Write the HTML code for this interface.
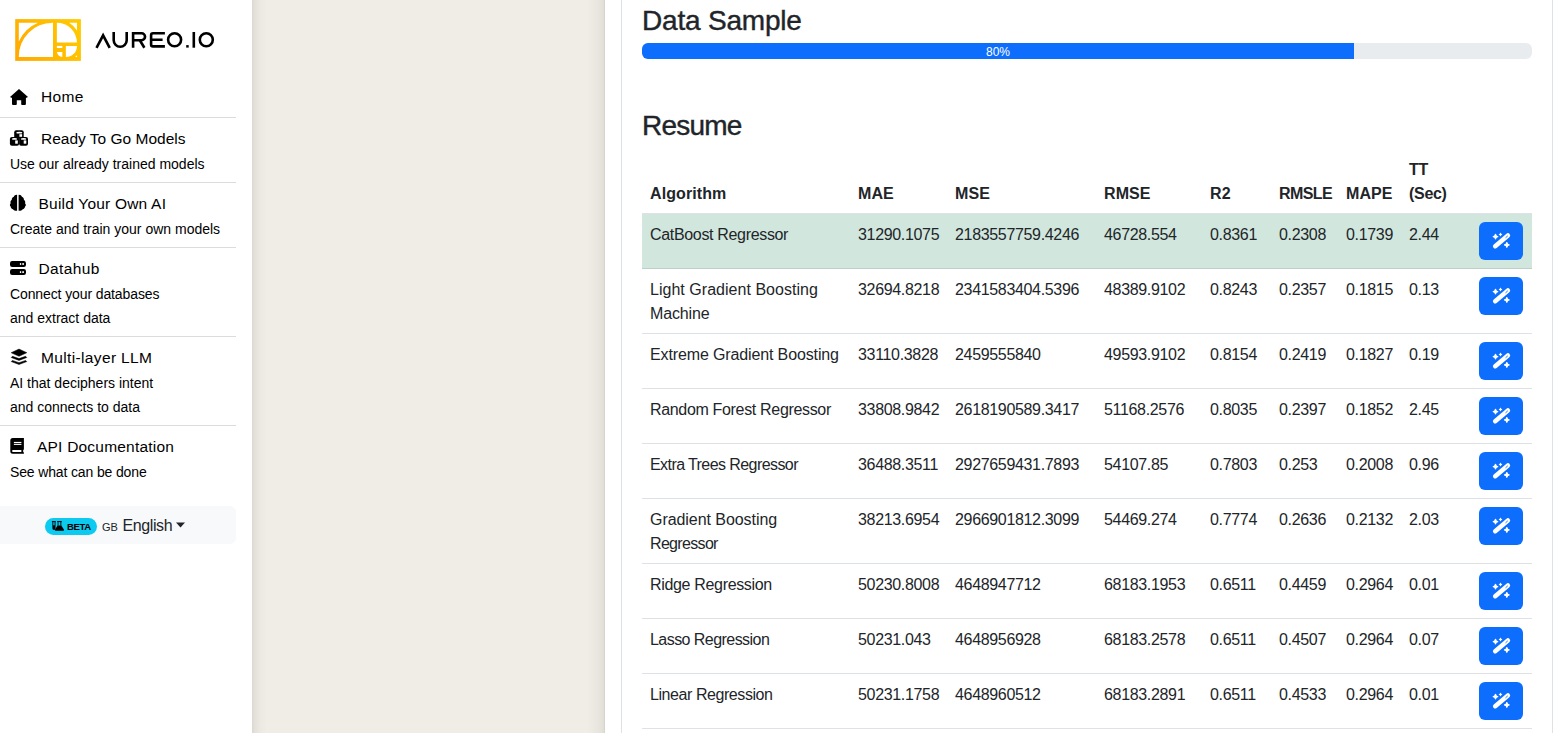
<!DOCTYPE html>
<html><head><meta charset="utf-8">
<style>
*{box-sizing:border-box;margin:0;padding:0}
html,body{width:1555px;height:733px;overflow:hidden;background:#fff;font-family:"Liberation Sans",sans-serif;color:#212529}
.abs{position:absolute}
#side{position:absolute;left:0;top:0;width:252px;height:733px;background:#fff}
#beige{position:absolute;left:252px;top:0;width:353px;height:733px;background:#f0ede6;
 background-image:linear-gradient(90deg,rgba(0,0,0,.085) 0,rgba(0,0,0,.05) 3px,rgba(0,0,0,.02) 8px,rgba(0,0,0,0) 15px),
 linear-gradient(270deg,rgba(0,0,0,.14) 0,rgba(0,0,0,.07) 1px,rgba(0,0,0,.045) 4px,rgba(0,0,0,.015) 12px,rgba(0,0,0,0) 19px)}
#main{position:absolute;left:605px;top:0;width:950px;height:733px;background:#fff}
#card{position:absolute;left:621px;top:-20px;width:932px;height:800px;border-left:1px solid #dee2e6;border-right:1px solid #dee2e6}
.t{position:absolute;white-space:nowrap;line-height:20px}
.nt{font-size:15.5px;color:#000}
.ns{font-size:14px;color:#000}
.div{position:absolute;left:0;width:236px;height:1px;background:#dcdcdc}

.h3{font-size:28px;line-height:34px;letter-spacing:-0.2px;color:#212529;-webkit-text-stroke:0.4px #212529}
#prog{left:642px;top:43px;width:890px;height:16px;background:#e9ecef;border-radius:6px;overflow:hidden}
#bar{width:712px;height:16px;background:#0d6efd;color:#fff;font-size:12px;line-height:16px;text-align:center}
#bar span{position:relative;top:1px}
#tbl{position:absolute;left:642px;top:149px;width:890px;border-collapse:collapse;table-layout:fixed;font-size:16px;line-height:24px;color:#212529}
#tbl td,#tbl th{padding:9px 8px 7px 8px;text-align:left;vertical-align:top;white-space:nowrap;border-bottom:1px solid #dee2e6;letter-spacing:-0.33px}
#tbl th{vertical-align:bottom;font-weight:bold;letter-spacing:0.1px}
#tbl thead th{border-bottom-color:#dee2e6}
#tbl tr{height:55px}
#tbl tr.succ td{background:#d1e7dd;border-bottom-color:#bcd0c7}
#tbl td.bt{padding:8px 9px 8px 8px;vertical-align:top}
.btn{display:block;width:44px;height:38px;background:#0d6efd;border-radius:6px}
</style></head><body>
<div id="side">
  <svg class="abs" style="left:0;top:0" width="240" height="70" viewBox="0 0 240 70">
    <defs><linearGradient id="lg" gradientUnits="userSpaceOnUse" x1="15" y1="61" x2="81" y2="19"><stop offset="0" stop-color="#ffa800"/><stop offset="1" stop-color="#ffcc00"/></linearGradient></defs>
    <rect x="15.2" y="19.1" width="65.7" height="41.8" fill="url(#lg)"/>
    <g fill="#fff">
      <path d="M18.8 22.8 H38 A36.7 36.7 0 0 0 18.8 41.4 Z"/>
      <path d="M18.8 57 V56.4 A33.6 33.6 0 0 1 52.4 22.8 H53 V57 Z"/>
      <path d="M56.9 22.8 A19.9 19.9 0 0 1 76.9 42.6 H56.9 Z"/>
      <path d="M69.2 22.8 H77 V30.6 A23.35 23.35 0 0 0 69.2 22.8 Z"/>
      <rect x="56.9" y="45.9" width="5.4" height="2.1"/>
      <path d="M65.9 45.9 H77 A11.1 11.1 0 0 1 65.9 57 Z"/>
      <path d="M62.3 52 V57 A6.2 6.2 0 0 1 56.9 52 Z"/>
      <path d="M77 55.2 V57 H75.2 Z"/>
    </g>
    <g fill="none" stroke="#000" stroke-width="2.6" stroke-linejoin="miter">
      <path d="M96.5 47.9 L103.1 35.3 L109.7 47.9"/>
      <path d="M113.7 32 V40.3 A6.3 6.3 0 0 0 126.7 40.3 V32"/>
      <path d="M133.1 47.7 V33.3 H141.6 A3.45 3.45 0 0 1 141.6 40.2 H133.1 M139.8 40.2 L144.4 47.7"/>
      <path d="M164.9 33.3 H153 Q151.1 33.3 151.1 35.2 V44.5 Q151.1 46.4 153 46.4 H164.9 M151.1 39.8 H162.6"/>
      <circle cx="174.6" cy="39.8" r="6.5"/>
      <rect x="186.2" y="45.1" width="2.5" height="2.5" fill="#000" stroke="none"/>
      <line x1="193.8" y1="32" x2="193.8" y2="47.7"/>
      <circle cx="206.3" cy="39.8" r="6.5"/>
    </g>
  </svg>

  <!-- Home -->
  <svg class="abs" style="left:10px;top:89px" width="18" height="16" viewBox="0 0 18 16"><path d="M9 0 L18 8 L15.9 9 L15.9 15 Q15.9 16 14.9 16 H12 Q11.2 16 11.2 15 V11.2 H6.8 V15 Q6.8 16 6 16 H3 Q2 16 2 15 V9 L0 8 Z" fill="#000"/></svg>
  <div class="t nt" style="left:41px;top:87px;letter-spacing:0.35px">Home</div>
  <div class="div" style="top:117px"></div>

  <!-- Ready -->
  <svg class="abs" style="left:9px;top:130px" width="20" height="16" viewBox="0 0 20 16"><g fill="#000"><rect x="5.2" y="0.3" width="9.5" height="8.5" rx="2"/><rect x="0.9" y="7.1" width="9.2" height="8.6" rx="2"/><rect x="10.1" y="7.1" width="8.9" height="8.6" rx="2"/></g><g fill="#fff"><ellipse cx="10.3" cy="2.65" rx="3.1" ry="0.85"/><rect x="10.4" y="4.2" width="2.7" height="2.6"/><ellipse cx="5.5" cy="8.95" rx="2.6" ry="0.85"/><rect x="6.2" y="10.4" width="2.6" height="3.3"/><ellipse cx="14.55" cy="8.95" rx="2.75" ry="0.85"/><rect x="14.7" y="10.4" width="2.6" height="3.3"/></g></svg>
  <div class="t nt" style="left:41px;top:129px">Ready To Go Models</div>
  <div class="t ns" style="left:10px;top:154px">Use our already trained models</div>
  <div class="div" style="top:182px"></div>

  <!-- Build -->
  <svg class="abs" style="left:9px;top:194px" width="18" height="18" viewBox="0 0 18 18"><path fill="#000" d="M8.1 0.9 C6.5 0.7 5.2 1.6 4.8 2.8 C3.4 3.2 2.7 4.4 2.8 5.8 C1.6 6.6 1.2 8 1.6 9.4 C0.6 10.2 0.6 11.6 1.6 12.4 C1.8 13.8 2.7 15 4 15.2 C4.8 16.4 6.6 17 8.1 16.8 Z M9.6 0.9 C11.2 0.7 12.5 1.6 12.9 2.8 C14.3 3.2 15 4.4 14.9 5.8 C16.1 6.6 16.5 8 16.1 9.4 C17.1 10.2 17.1 11.6 16.1 12.4 C15.9 13.8 15 15 13.7 15.2 C12.9 16.4 11.1 17 9.6 16.8 Z"/></svg>
  <div class="t nt" style="left:38.5px;top:194px;letter-spacing:0.21px">Build Your Own AI</div>
  <div class="t ns" style="left:10px;top:219px">Create and train your own models</div>
  <div class="div" style="top:247px"></div>

  <!-- Datahub -->
  <svg class="abs" style="left:10px;top:261px" width="17" height="15" viewBox="0 0 17 15"><rect x="0" y="0" width="16" height="5.9" rx="2.2" fill="#000"/><rect x="0" y="8.1" width="16" height="5.9" rx="2.2" fill="#000"/><g fill="#fff"><rect x="9.9" y="2.1" width="1.3" height="1.8"/><rect x="12.3" y="2.1" width="1.6" height="1.8"/><rect x="9.9" y="10.2" width="1.3" height="1.8"/><rect x="12.3" y="10.2" width="1.6" height="1.8"/></g></svg>
  <div class="t nt" style="left:38.5px;top:259px;letter-spacing:0.38px">Datahub</div>
  <div class="t ns" style="left:10px;top:284px;letter-spacing:-0.11px">Connect your databases</div>
  <div class="t ns" style="left:10px;top:308px">and extract data</div>
  <div class="div" style="top:336px"></div>

  <!-- Multi -->
  <svg class="abs" style="left:10px;top:348px" width="18" height="18" viewBox="0 0 18 18"><g fill="#000" stroke="#000" stroke-width="0.5" stroke-linejoin="round"><path d="M9 1.1 L16.8 4.7 L9 8.3 L1.2 4.7 Z"/><path d="M1.2 9.5 L9 12.4 L16.8 9.5 L15.6 8.3 L9 10.6 L2.4 8.3 Z"/><path d="M1.2 13.6 L9 16.5 L16.8 13.6 L15.6 12.4 L9 14.7 L2.4 12.4 Z"/></g></svg>
  <div class="t nt" style="left:41px;top:348px;letter-spacing:0.36px">Multi-layer LLM</div>
  <div class="t ns" style="left:10px;top:373px">AI that deciphers intent</div>
  <div class="t ns" style="left:10px;top:397px">and connects to data</div>
  <div class="div" style="top:425px"></div>

  <!-- API -->
  <svg class="abs" style="left:10px;top:438px" width="15" height="16" viewBox="0 0 15 16"><path d="M2.8 0.1 H13.9 V11.8 H13.2 V14.2 H13.9 V15.7 H2.8 Q0.3 15.7 0.3 13.2 V2.6 Q0.3 0.1 2.8 0.1 Z" fill="#000"/><rect x="3.9" y="3.9" width="7.5" height="1.1" fill="#fff"/><rect x="3.9" y="5.8" width="7.5" height="1.1" fill="#fff"/><path d="M3 12.1 H11.4 V14 H3 Q2.1 14 2.1 13.05 Q2.1 12.1 3 12.1Z" fill="#fff"/></svg>
  <div class="t nt" style="left:37px;top:437px;letter-spacing:0.21px">API Documentation</div>
  <div class="t ns" style="left:10px;top:462px;letter-spacing:-0.14px">See what can be done</div>

  <!-- language -->
  <div class="abs" style="left:-8px;top:506px;width:244px;height:38px;background:#f8f9fa;border-radius:6px"></div>
  <div class="abs" style="left:45px;top:518px;width:52px;height:17px;background:#0dcaf0;border-radius:9px"></div>
  <svg class="abs" style="left:51px;top:520px" width="14" height="12" viewBox="0 0 14 12"><g fill="#000"><rect x="0.9" y="1.1" width="3.9" height="1"/><rect x="1.4" y="2" width="0.9" height="3.5"/><rect x="3.6" y="2" width="0.9" height="3.5"/><path d="M1.4 5.2 H4.5 V8 Q4.5 9.9 2.95 9.9 Q1.4 9.9 1.4 8 Z"/><rect x="6.1" y="1.1" width="4.7" height="1"/><rect x="6.6" y="2" width="0.9" height="3.7"/><rect x="9.4" y="2" width="0.9" height="3.7"/><path d="M6.6 5.5 H10.3 L12.9 9.6 Q13.3 10.8 12.2 10.8 H4.7 Q3.6 10.8 4 9.6 Z"/></g></svg>
  <div class="t" style="left:67px;top:517px;font-size:9.6px;letter-spacing:-0.45px;font-weight:bold;color:#000">BETA</div>
  <div class="t" style="left:102px;top:517px;font-size:11px;color:#212529">GB</div>
  <div class="t" style="left:122.5px;top:516px;font-size:16px;letter-spacing:-0.4px;color:#212529">English</div>
  <svg class="abs" style="left:176px;top:522px" width="9" height="6" viewBox="0 0 9 6"><path d="M0 0.5 H9 L4.5 5.5Z" fill="#212529"/></svg>
</div>

<div id="beige"></div>
<div id="main"></div>
<div id="card"></div>
<div class="t h3" style="left:642px;top:4px">Data Sample</div>
<div class="abs" id="prog"><div id="bar"><span>80%</span></div></div>
<div class="t h3" style="left:642px;top:109px;letter-spacing:-0.8px">Resume</div>
<table id="tbl">
<colgroup><col style="width:208px"><col style="width:97px"><col style="width:149px"><col style="width:106px"><col style="width:69px"><col style="width:67px"><col style="width:63px"><col style="width:70px"><col style="width:61px"></colgroup>
<thead><tr><th>Algorithm</th><th>MAE</th><th>MSE</th><th>RMSE</th><th>R2</th><th style="letter-spacing:-0.6px">RMSLE</th><th>MAPE</th><th style="letter-spacing:-0.3px">TT<br>(Sec)</th><th></th></tr></thead>
<tbody>
<tr class="succ"><td>CatBoost Regressor</td><td>31290.1075</td><td>2183557759.4246</td><td>46728.554</td><td>0.8361</td><td>0.2308</td><td>0.1739</td><td>2.44</td><td class="bt"><span class="btn"><svg width="44" height="38" viewBox="0 0 44 38"><line x1="16.2" y1="24.2" x2="28.9" y2="13.5" stroke="#fff" stroke-width="4.5" stroke-linecap="round"/><line x1="26.8" y1="15.6" x2="28.5" y2="14.1" stroke="#0d6efd" stroke-width="0.9" stroke-linecap="round"/><path d="M16.5 11.60 L17.71 13.38 L19.50 14.6 L17.71 15.81 L16.5 17.60 L15.29 15.81 L13.50 14.6 L15.29 13.38 Z M21.5 10.60 L22.27 11.73 L23.40 12.5 L22.27 13.27 L21.5 14.40 L20.73 13.27 L19.60 12.5 L20.73 11.73 Z M27.8 19.90 L29.02 21.68 L30.80 22.9 L29.02 24.11 L27.8 25.90 L26.59 24.11 L24.80 22.9 L26.59 21.68 Z" fill="#fff"/><path d="M15.85 12.00 H17.15 V13.95 H19.10 V15.25 H17.15 V17.20 H15.85 V15.25 H13.90 V13.95 H15.85 Z M27.15 20.30 H28.45 V22.25 H30.40 V23.55 H28.45 V25.50 H27.15 V23.55 H25.20 V22.25 H27.15 Z" fill="#fff"/></svg></span></td></tr>
<tr style="height:65px"><td><span style="letter-spacing:0.03px">Light Gradient Boosting</span><br><span style="letter-spacing:-0.13px">Machine</span></td><td>32694.8218</td><td>2341583404.5396</td><td>48389.9102</td><td>0.8243</td><td>0.2357</td><td>0.1815</td><td>0.13</td><td class="bt"><span class="btn"><svg width="44" height="38" viewBox="0 0 44 38"><line x1="16.2" y1="24.2" x2="28.9" y2="13.5" stroke="#fff" stroke-width="4.5" stroke-linecap="round"/><line x1="26.8" y1="15.6" x2="28.5" y2="14.1" stroke="#0d6efd" stroke-width="0.9" stroke-linecap="round"/><path d="M16.5 11.60 L17.71 13.38 L19.50 14.6 L17.71 15.81 L16.5 17.60 L15.29 15.81 L13.50 14.6 L15.29 13.38 Z M21.5 10.60 L22.27 11.73 L23.40 12.5 L22.27 13.27 L21.5 14.40 L20.73 13.27 L19.60 12.5 L20.73 11.73 Z M27.8 19.90 L29.02 21.68 L30.80 22.9 L29.02 24.11 L27.8 25.90 L26.59 24.11 L24.80 22.9 L26.59 21.68 Z" fill="#fff"/><path d="M15.85 12.00 H17.15 V13.95 H19.10 V15.25 H17.15 V17.20 H15.85 V15.25 H13.90 V13.95 H15.85 Z M27.15 20.30 H28.45 V22.25 H30.40 V23.55 H28.45 V25.50 H27.15 V23.55 H25.20 V22.25 H27.15 Z" fill="#fff"/></svg></span></td></tr>
<tr><td style="letter-spacing:-0.13px">Extreme Gradient Boosting</td><td>33110.3828</td><td>2459555840</td><td>49593.9102</td><td>0.8154</td><td>0.2419</td><td>0.1827</td><td>0.19</td><td class="bt"><span class="btn"><svg width="44" height="38" viewBox="0 0 44 38"><line x1="16.2" y1="24.2" x2="28.9" y2="13.5" stroke="#fff" stroke-width="4.5" stroke-linecap="round"/><line x1="26.8" y1="15.6" x2="28.5" y2="14.1" stroke="#0d6efd" stroke-width="0.9" stroke-linecap="round"/><path d="M16.5 11.60 L17.71 13.38 L19.50 14.6 L17.71 15.81 L16.5 17.60 L15.29 15.81 L13.50 14.6 L15.29 13.38 Z M21.5 10.60 L22.27 11.73 L23.40 12.5 L22.27 13.27 L21.5 14.40 L20.73 13.27 L19.60 12.5 L20.73 11.73 Z M27.8 19.90 L29.02 21.68 L30.80 22.9 L29.02 24.11 L27.8 25.90 L26.59 24.11 L24.80 22.9 L26.59 21.68 Z" fill="#fff"/><path d="M15.85 12.00 H17.15 V13.95 H19.10 V15.25 H17.15 V17.20 H15.85 V15.25 H13.90 V13.95 H15.85 Z M27.15 20.30 H28.45 V22.25 H30.40 V23.55 H28.45 V25.50 H27.15 V23.55 H25.20 V22.25 H27.15 Z" fill="#fff"/></svg></span></td></tr>
<tr><td>Random Forest Regressor</td><td>33808.9842</td><td>2618190589.3417</td><td>51168.2576</td><td>0.8035</td><td>0.2397</td><td>0.1852</td><td>2.45</td><td class="bt"><span class="btn"><svg width="44" height="38" viewBox="0 0 44 38"><line x1="16.2" y1="24.2" x2="28.9" y2="13.5" stroke="#fff" stroke-width="4.5" stroke-linecap="round"/><line x1="26.8" y1="15.6" x2="28.5" y2="14.1" stroke="#0d6efd" stroke-width="0.9" stroke-linecap="round"/><path d="M16.5 11.60 L17.71 13.38 L19.50 14.6 L17.71 15.81 L16.5 17.60 L15.29 15.81 L13.50 14.6 L15.29 13.38 Z M21.5 10.60 L22.27 11.73 L23.40 12.5 L22.27 13.27 L21.5 14.40 L20.73 13.27 L19.60 12.5 L20.73 11.73 Z M27.8 19.90 L29.02 21.68 L30.80 22.9 L29.02 24.11 L27.8 25.90 L26.59 24.11 L24.80 22.9 L26.59 21.68 Z" fill="#fff"/><path d="M15.85 12.00 H17.15 V13.95 H19.10 V15.25 H17.15 V17.20 H15.85 V15.25 H13.90 V13.95 H15.85 Z M27.15 20.30 H28.45 V22.25 H30.40 V23.55 H28.45 V25.50 H27.15 V23.55 H25.20 V22.25 H27.15 Z" fill="#fff"/></svg></span></td></tr>
<tr><td style="letter-spacing:-0.58px">Extra Trees Regressor</td><td>36488.3511</td><td>2927659431.7893</td><td>54107.85</td><td>0.7803</td><td>0.253</td><td>0.2008</td><td>0.96</td><td class="bt"><span class="btn"><svg width="44" height="38" viewBox="0 0 44 38"><line x1="16.2" y1="24.2" x2="28.9" y2="13.5" stroke="#fff" stroke-width="4.5" stroke-linecap="round"/><line x1="26.8" y1="15.6" x2="28.5" y2="14.1" stroke="#0d6efd" stroke-width="0.9" stroke-linecap="round"/><path d="M16.5 11.60 L17.71 13.38 L19.50 14.6 L17.71 15.81 L16.5 17.60 L15.29 15.81 L13.50 14.6 L15.29 13.38 Z M21.5 10.60 L22.27 11.73 L23.40 12.5 L22.27 13.27 L21.5 14.40 L20.73 13.27 L19.60 12.5 L20.73 11.73 Z M27.8 19.90 L29.02 21.68 L30.80 22.9 L29.02 24.11 L27.8 25.90 L26.59 24.11 L24.80 22.9 L26.59 21.68 Z" fill="#fff"/><path d="M15.85 12.00 H17.15 V13.95 H19.10 V15.25 H17.15 V17.20 H15.85 V15.25 H13.90 V13.95 H15.85 Z M27.15 20.30 H28.45 V22.25 H30.40 V23.55 H28.45 V25.50 H27.15 V23.55 H25.20 V22.25 H27.15 Z" fill="#fff"/></svg></span></td></tr>
<tr style="height:65px"><td><span style="letter-spacing:-0.06px">Gradient Boosting</span><br><span style="letter-spacing:-0.67px">Regressor</span></td><td>38213.6954</td><td>2966901812.3099</td><td>54469.274</td><td>0.7774</td><td>0.2636</td><td>0.2132</td><td>2.03</td><td class="bt"><span class="btn"><svg width="44" height="38" viewBox="0 0 44 38"><line x1="16.2" y1="24.2" x2="28.9" y2="13.5" stroke="#fff" stroke-width="4.5" stroke-linecap="round"/><line x1="26.8" y1="15.6" x2="28.5" y2="14.1" stroke="#0d6efd" stroke-width="0.9" stroke-linecap="round"/><path d="M16.5 11.60 L17.71 13.38 L19.50 14.6 L17.71 15.81 L16.5 17.60 L15.29 15.81 L13.50 14.6 L15.29 13.38 Z M21.5 10.60 L22.27 11.73 L23.40 12.5 L22.27 13.27 L21.5 14.40 L20.73 13.27 L19.60 12.5 L20.73 11.73 Z M27.8 19.90 L29.02 21.68 L30.80 22.9 L29.02 24.11 L27.8 25.90 L26.59 24.11 L24.80 22.9 L26.59 21.68 Z" fill="#fff"/><path d="M15.85 12.00 H17.15 V13.95 H19.10 V15.25 H17.15 V17.20 H15.85 V15.25 H13.90 V13.95 H15.85 Z M27.15 20.30 H28.45 V22.25 H30.40 V23.55 H28.45 V25.50 H27.15 V23.55 H25.20 V22.25 H27.15 Z" fill="#fff"/></svg></span></td></tr>
<tr><td>Ridge Regression</td><td>50230.8008</td><td>4648947712</td><td>68183.1953</td><td>0.6511</td><td>0.4459</td><td>0.2964</td><td>0.01</td><td class="bt"><span class="btn"><svg width="44" height="38" viewBox="0 0 44 38"><line x1="16.2" y1="24.2" x2="28.9" y2="13.5" stroke="#fff" stroke-width="4.5" stroke-linecap="round"/><line x1="26.8" y1="15.6" x2="28.5" y2="14.1" stroke="#0d6efd" stroke-width="0.9" stroke-linecap="round"/><path d="M16.5 11.60 L17.71 13.38 L19.50 14.6 L17.71 15.81 L16.5 17.60 L15.29 15.81 L13.50 14.6 L15.29 13.38 Z M21.5 10.60 L22.27 11.73 L23.40 12.5 L22.27 13.27 L21.5 14.40 L20.73 13.27 L19.60 12.5 L20.73 11.73 Z M27.8 19.90 L29.02 21.68 L30.80 22.9 L29.02 24.11 L27.8 25.90 L26.59 24.11 L24.80 22.9 L26.59 21.68 Z" fill="#fff"/><path d="M15.85 12.00 H17.15 V13.95 H19.10 V15.25 H17.15 V17.20 H15.85 V15.25 H13.90 V13.95 H15.85 Z M27.15 20.30 H28.45 V22.25 H30.40 V23.55 H28.45 V25.50 H27.15 V23.55 H25.20 V22.25 H27.15 Z" fill="#fff"/></svg></span></td></tr>
<tr><td style="letter-spacing:-0.55px">Lasso Regression</td><td>50231.043</td><td>4648956928</td><td>68183.2578</td><td>0.6511</td><td>0.4507</td><td>0.2964</td><td>0.07</td><td class="bt"><span class="btn"><svg width="44" height="38" viewBox="0 0 44 38"><line x1="16.2" y1="24.2" x2="28.9" y2="13.5" stroke="#fff" stroke-width="4.5" stroke-linecap="round"/><line x1="26.8" y1="15.6" x2="28.5" y2="14.1" stroke="#0d6efd" stroke-width="0.9" stroke-linecap="round"/><path d="M16.5 11.60 L17.71 13.38 L19.50 14.6 L17.71 15.81 L16.5 17.60 L15.29 15.81 L13.50 14.6 L15.29 13.38 Z M21.5 10.60 L22.27 11.73 L23.40 12.5 L22.27 13.27 L21.5 14.40 L20.73 13.27 L19.60 12.5 L20.73 11.73 Z M27.8 19.90 L29.02 21.68 L30.80 22.9 L29.02 24.11 L27.8 25.90 L26.59 24.11 L24.80 22.9 L26.59 21.68 Z" fill="#fff"/><path d="M15.85 12.00 H17.15 V13.95 H19.10 V15.25 H17.15 V17.20 H15.85 V15.25 H13.90 V13.95 H15.85 Z M27.15 20.30 H28.45 V22.25 H30.40 V23.55 H28.45 V25.50 H27.15 V23.55 H25.20 V22.25 H27.15 Z" fill="#fff"/></svg></span></td></tr>
<tr><td style="letter-spacing:-0.43px">Linear Regression</td><td>50231.1758</td><td>4648960512</td><td>68183.2891</td><td>0.6511</td><td>0.4533</td><td>0.2964</td><td>0.01</td><td class="bt"><span class="btn"><svg width="44" height="38" viewBox="0 0 44 38"><line x1="16.2" y1="24.2" x2="28.9" y2="13.5" stroke="#fff" stroke-width="4.5" stroke-linecap="round"/><line x1="26.8" y1="15.6" x2="28.5" y2="14.1" stroke="#0d6efd" stroke-width="0.9" stroke-linecap="round"/><path d="M16.5 11.60 L17.71 13.38 L19.50 14.6 L17.71 15.81 L16.5 17.60 L15.29 15.81 L13.50 14.6 L15.29 13.38 Z M21.5 10.60 L22.27 11.73 L23.40 12.5 L22.27 13.27 L21.5 14.40 L20.73 13.27 L19.60 12.5 L20.73 11.73 Z M27.8 19.90 L29.02 21.68 L30.80 22.9 L29.02 24.11 L27.8 25.90 L26.59 24.11 L24.80 22.9 L26.59 21.68 Z" fill="#fff"/><path d="M15.85 12.00 H17.15 V13.95 H19.10 V15.25 H17.15 V17.20 H15.85 V15.25 H13.90 V13.95 H15.85 Z M27.15 20.30 H28.45 V22.25 H30.40 V23.55 H28.45 V25.50 H27.15 V23.55 H25.20 V22.25 H27.15 Z" fill="#fff"/></svg></span></td></tr>
<tr><td>Huber Regressor</td><td>52000.0000</td><td>5000000000</td><td>70000.0000</td><td>0.6000</td><td>0.4600</td><td>0.3000</td><td>0.05</td><td class="bt"><span class="btn"><svg width="44" height="38" viewBox="0 0 44 38"><line x1="16.2" y1="24.2" x2="28.9" y2="13.5" stroke="#fff" stroke-width="4.5" stroke-linecap="round"/><line x1="26.8" y1="15.6" x2="28.5" y2="14.1" stroke="#0d6efd" stroke-width="0.9" stroke-linecap="round"/><path d="M16.5 11.60 L17.71 13.38 L19.50 14.6 L17.71 15.81 L16.5 17.60 L15.29 15.81 L13.50 14.6 L15.29 13.38 Z M21.5 10.60 L22.27 11.73 L23.40 12.5 L22.27 13.27 L21.5 14.40 L20.73 13.27 L19.60 12.5 L20.73 11.73 Z M27.8 19.90 L29.02 21.68 L30.80 22.9 L29.02 24.11 L27.8 25.90 L26.59 24.11 L24.80 22.9 L26.59 21.68 Z" fill="#fff"/><path d="M15.85 12.00 H17.15 V13.95 H19.10 V15.25 H17.15 V17.20 H15.85 V15.25 H13.90 V13.95 H15.85 Z M27.15 20.30 H28.45 V22.25 H30.40 V23.55 H28.45 V25.50 H27.15 V23.55 H25.20 V22.25 H27.15 Z" fill="#fff"/></svg></span></td></tr>
</tbody></table>


</body></html>
